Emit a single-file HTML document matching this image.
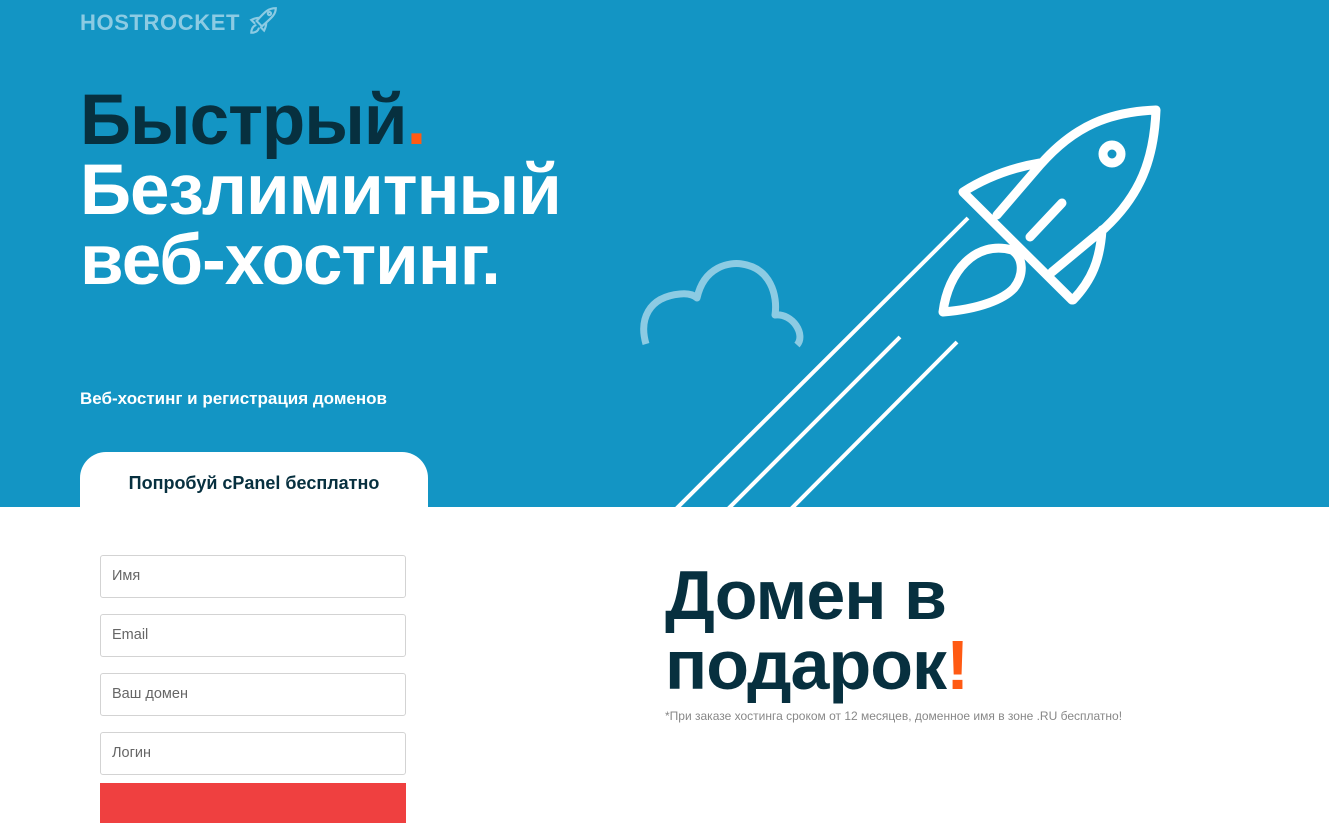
<!DOCTYPE html>
<html><head><meta charset="utf-8"><style>
*{margin:0;padding:0;box-sizing:border-box}
body{width:1329px;height:801px;overflow:hidden;background:#fff;font-family:"Liberation Sans",sans-serif;position:relative}
.hero{position:absolute;left:0;top:0;width:1329px;height:507px;background:#1395c4}
.logo{position:absolute;left:80px;top:5px;font-size:22px;font-weight:bold;color:#8ccbe3;letter-spacing:0.6px}
h1{position:absolute;left:80px;top:86px;font-size:71px;line-height:70px;font-weight:bold;color:#fff;letter-spacing:-1px}
h1 .d{color:#07303f}
.o{color:#ff5a13}
.sub{position:absolute;left:80px;top:389px;font-size:17px;font-weight:bold;color:#fff}
.card{position:absolute;left:80px;top:452px;width:348px;height:360px;background:#fff;border-radius:26px 26px 0 0}
.card h3{text-align:center;font-size:18px;color:#07303f;margin-top:21px}
.in{position:absolute;left:20px;width:306px;height:43px;border:1px solid #d3d3d3;border-radius:3px;font-size:14.5px;color:#666;padding:12px 0 0 11px}
.btn{position:absolute;left:20px;top:331px;width:306px;height:40px;background:#ef4040}
h2{position:absolute;left:665px;top:560px;font-size:70px;line-height:70px;font-weight:bold;color:#07303f;letter-spacing:-1px}
.note{position:absolute;left:665px;top:709px;font-size:12px;color:#888}
</style></head><body>
<div class="hero">
<div class="logo">HOSTROCKET <svg width="32" height="32" viewBox="0 0 30 30" style="vertical-align:-7px" fill="none" stroke="#8ccbe3" stroke-width="2" stroke-linecap="round"><path d="M27 3C20 3 17 6 9 15L14 20C23 12 27 9 27 3Z"/><circle cx="21" cy="8" r="1.5"/><path d="M11 12C8 12 6 13 4 14L7 17M18 17C18 20 17 22 16 24L13 21M8 19C5 20 4 24 4 26C7 26 10 25 11 22"/></svg></div>
<h1><span class="d">Быстрый</span><span class="o">.</span><br>Безлимитный<br>веб-хостинг.</h1>
<div class="sub">Веб-хостинг и регистрация доменов</div>
<svg style="position:absolute;left:0;top:0" width="1329" height="507">
<g fill="none" stroke="#fff" stroke-linecap="round" stroke-linejoin="round">
<path stroke="#8ccbe3" stroke-width="7" stroke-linecap="butt" d="M646,344 C639,320 648,297 680,294 C690,293 695,296 697,298 C704,266 730,262 742,264 C770,268 778,295 775,315 C793,313 806,335 797,345"/>
<g stroke-width="4" stroke-linecap="butt"><path d="M968,218 L675,510"/><path d="M900,337 L727,510"/><path d="M957,342 L790,510"/></g>
<g stroke-width="9">
<path d="M997,215 L1040,165 C1075,125 1110,112 1156,110 C1154,160 1140,195 1105,228 L1052,272"/>
<path d="M1040,163 C1010,168 985,178 963,192 L1072,300"/>
<path d="M1102,230 C1100,260 1092,280 1073,300"/>
<path d="M1062,203 L1030,237"/>
<circle cx="1112" cy="154" r="9"/>
<path d="M1012,250 C975,240 948,272 943,312 C980,309 1004,299 1014,288 C1024,275 1024,258 1012,250 Z"/>
</g></g></svg>
</div>
<div class="card"><h3>Попробуй cPanel бесплатно</h3>
<div class="in" style="top:103px">Имя</div>
<div class="in" style="top:162px">Email</div>
<div class="in" style="top:221px">Ваш домен</div>
<div class="in" style="top:280px">Логин</div>
<div class="btn"></div></div>
<h2>Домен в<br>подарок<span class="o">!</span></h2>
<div class="note">*При заказе хостинга сроком от 12 месяцев, доменное имя в зоне .RU бесплатно!</div>
</body></html>
